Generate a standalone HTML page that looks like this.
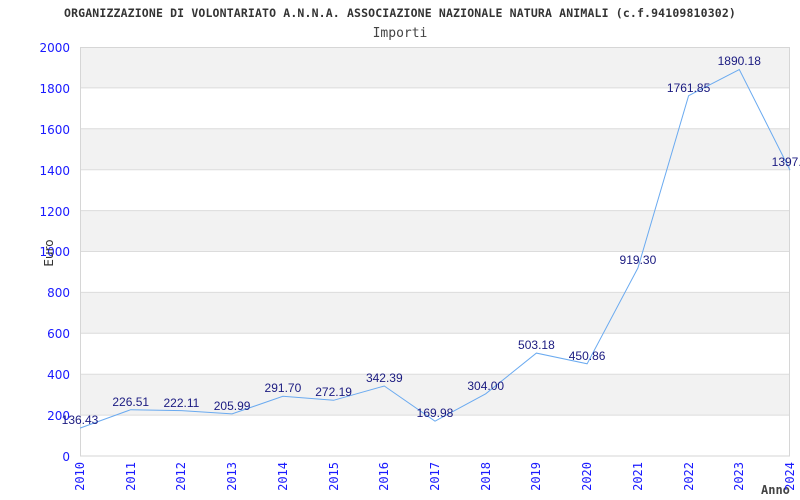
<!DOCTYPE html>
<html><head><meta charset="utf-8"><style>
html,body{margin:0;padding:0;background:#fff;width:800px;height:500px;overflow:hidden}
</style></head><body>
<svg width="800" height="500" xmlns="http://www.w3.org/2000/svg">
<rect x="0" y="0" width="800" height="500" fill="#fff"/>
<g fill="#f2f2f2">
<rect x="80" y="47" width="710" height="40.9"/>
<rect x="80" y="128.8" width="710" height="40.9"/>
<rect x="80" y="210.6" width="710" height="40.9"/>
<rect x="80" y="292.4" width="710" height="40.9"/>
<rect x="80" y="374.2" width="710" height="40.9"/>
</g>
<g stroke="#dcdcdc" stroke-width="1">
<line x1="80" y1="87.9" x2="790" y2="87.9"/>
<line x1="80" y1="128.8" x2="790" y2="128.8"/>
<line x1="80" y1="169.7" x2="790" y2="169.7"/>
<line x1="80" y1="210.6" x2="790" y2="210.6"/>
<line x1="80" y1="251.5" x2="790" y2="251.5"/>
<line x1="80" y1="292.4" x2="790" y2="292.4"/>
<line x1="80" y1="333.3" x2="790" y2="333.3"/>
<line x1="80" y1="374.2" x2="790" y2="374.2"/>
<line x1="80" y1="415.1" x2="790" y2="415.1"/>
</g>
<rect x="80.5" y="47.5" width="709" height="408.5" fill="none" stroke="#d6d6d6"/>
<text x="400" y="17" text-anchor="middle" font-family="'DejaVu Sans Mono','Liberation Mono',monospace" font-weight="bold" font-size="11.5" letter-spacing="0.15" fill="#333">ORGANIZZAZIONE DI VOLONTARIATO A.N.N.A. ASSOCIAZIONE NAZIONALE NATURA ANIMALI (c.f.94109810302)</text>
<text x="400" y="37" text-anchor="middle" font-family="'DejaVu Sans Mono',monospace" font-size="13" fill="#444">Importi</text>
<g font-family="'DejaVu Sans','Liberation Sans',sans-serif" font-size="12" fill="#1a1aff" text-anchor="end">
<text x="70" y="52">2000</text><text x="70" y="93">1800</text><text x="70" y="134">1600</text>
<text x="70" y="175">1400</text><text x="70" y="216">1200</text><text x="70" y="256">1000</text>
<text x="70" y="297">800</text><text x="70" y="338">600</text><text x="70" y="379">400</text>
<text x="70" y="420">200</text><text x="70" y="461">0</text>
</g>
<text transform="translate(53,253) rotate(-90)" text-anchor="middle" font-family="'DejaVu Sans',sans-serif" font-size="12" fill="#333">Euro</text>
<text x="761" y="494" font-family="'DejaVu Sans Mono',monospace" font-weight="bold" font-size="12" fill="#444">Anno</text>
<g font-family="'DejaVu Sans Mono',monospace" font-size="12" fill="#1a1aff" text-anchor="end">
<text transform="translate(84,462) rotate(-90)">2010</text>
<text transform="translate(135,462) rotate(-90)">2011</text>
<text transform="translate(185,462) rotate(-90)">2012</text>
<text transform="translate(236,462) rotate(-90)">2013</text>
<text transform="translate(287,462) rotate(-90)">2014</text>
<text transform="translate(338,462) rotate(-90)">2015</text>
<text transform="translate(388,462) rotate(-90)">2016</text>
<text transform="translate(439,462) rotate(-90)">2017</text>
<text transform="translate(490,462) rotate(-90)">2018</text>
<text transform="translate(540,462) rotate(-90)">2019</text>
<text transform="translate(591,462) rotate(-90)">2020</text>
<text transform="translate(642,462) rotate(-90)">2021</text>
<text transform="translate(693,462) rotate(-90)">2022</text>
<text transform="translate(743,462) rotate(-90)">2023</text>
<text transform="translate(794,462) rotate(-90)">2024</text>
</g>
<polyline fill="none" stroke="#6aaaf0" stroke-width="1" points="80,428.1 130.7,409.7 181.4,410.6 232.1,413.9 282.9,396.3 333.6,400.3 384.3,386 435,421.2 485.7,393.8 536.4,353.1 587.1,363.8 637.9,268 688.6,95.7 739.3,69.5 790,170.1"/>
<g font-family="'Liberation Sans',Arial,sans-serif" font-size="12" fill="#1a1a80" text-anchor="middle">
<text x="80" y="424">136.43</text>
<text x="130.7" y="406">226.51</text>
<text x="181.4" y="407">222.11</text>
<text x="232.1" y="410">205.99</text>
<text x="282.9" y="392">291.70</text>
<text x="333.6" y="396">272.19</text>
<text x="384.3" y="382">342.39</text>
<text x="435" y="417">169.98</text>
<text x="485.7" y="390">304.00</text>
<text x="536.4" y="349">503.18</text>
<text x="587.1" y="360">450.86</text>
<text x="637.9" y="264">919.30</text>
<text x="688.6" y="92">1761.85</text>
<text x="739.3" y="65">1890.18</text>
<text x="790" y="166">1397.9</text>
</g>
</svg>
</body></html>
